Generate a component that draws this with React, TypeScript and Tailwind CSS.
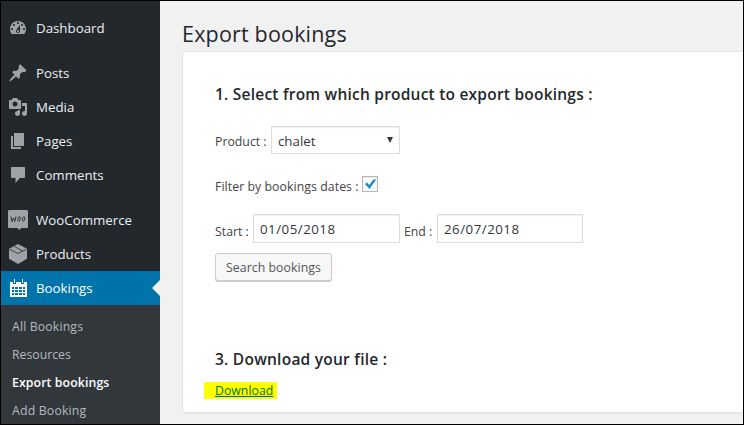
import type { ReactNode } from 'react';

const icons: Record<string, ReactNode> = {
  dashboard: (
    <path
      fillRule="evenodd"
      d="M3.76 16h12.48c1.1-1.37 1.76-3.11 1.76-5 0-4.42-3.58-8-8-8s-8 3.58-8 8c0 1.89.66 3.63 1.76 5zM10 4c.55 0 1 .45 1 1s-.45 1-1 1-1-.45-1-1 .45-1 1-1zM6 6c.55 0 1 .45 1 1s-.45 1-1 1-1-.45-1-1 .45-1 1-1zm8 0c.55 0 1 .45 1 1s-.45 1-1 1-1-.45-1-1 .45-1 1-1zm-5.37 5.55L12 7v6c0 1.1-.9 2-2 2s-2-.9-2-2c0-.57.24-1.08.63-1.45zM4 10c.55 0 1 .45 1 1s-.45 1-1 1-1-.45-1-1 .45-1 1-1zm12 0c.55 0 1 .45 1 1s-.45 1-1 1-1-.45-1-1 .45-1 1-1zm-5 3c0-.55-.45-1-1-1s-1 .45-1 1 .45 1 1 1 1-.45 1-1z"
    />
  ),
  posts: (
    <path d="M10.44 3.02l1.82-1.82 6.36 6.35-1.83 1.82c-1.05-.68-2.48-.57-3.41.36l-.75.75c-.92.93-1.04 2.35-.35 3.41l-1.83 1.82-2.41-2.41-2.8 2.79c-.42.42-3.38 2.71-3.8 2.29s1.86-3.39 2.28-3.81l2.79-2.79L4.1 9.36l1.83-1.82c1.05.69 2.48.57 3.4-.36l.75-.75c.93-.92 1.05-2.35.36-3.41z" />
  ),
  media: (
    <path
      fillRule="evenodd"
      d="M13 11V4c0-.55-.45-1-1-1h-1.67L9 1H5L3.67 3H2c-.55 0-1 .45-1 1v7c0 .55.45 1 1 1h10c.55 0 1-.45 1-1zM7 4.5c1.38 0 2.5 1.12 2.5 2.5S8.38 9.5 7 9.5 4.5 8.38 4.5 7 5.62 4.5 7 4.5zM14 6h5v10.5c0 1.38-1.12 2.5-2.5 2.5S14 17.88 14 16.5s1.12-2.5 2.5-2.5c.17 0 .34.02.5.05V9h-3V6zm-4 8.05V13h2v3.5c0 1.38-1.12 2.5-2.5 2.5S7 17.88 7 16.5 8.12 14 9.5 14c.17 0 .34.02.5.05z"
    />
  ),
  pages: <path d="M6 15V2h10v13H6zm-1 1h8v2H3V5h2v11z" />,
  comments: (
    <path d="M4 2h12c.6 0 1 .4 1 1v9c0 .6-.4 1-1 1h-4l-4.500 5v-5H4c-.6 0-1-.4-1-1V3c0-.6.4-1 1-1z" />
  ),
  woo: (
    <>
      <path d="M1.600 0h16.800c1 0 1.600.7 1.600 1.600v14.800c0 1-.7 1.600-1.600 1.600H13l-1.500 2-2.300-2H1.600C.6 18 0 17.400 0 16.400V1.600C0 .7.6 0 1.600 0z" />
      <path
        d="M3 6.500l1 5 1.600-3.500 1.100 3.500L8 6.500M16.300 6.800c-1.700-1-2.600 4.400-1 4.400 1.500 0 1.900-3.600 1-4.400zM11.800 6.800c-1.700-1-2.600 4.400-1 4.400 1.500 0 1.900-3.600 1-4.400z"
        fill="none"
        stroke="#23282d"
        strokeWidth="0.9"
      />
    </>
  ),
  products: (
    <>
      <path d="M10 0l9 4.800v10L10 20l-9-5.200v-10z" />
      <path d="M1.500 5.300L10 9.500l8.500-4.200M6.500 2.500l8.300 4.700" fill="none" stroke="#23282d" strokeWidth="0.8" />
    </>
  ),
  bookings: (
    <path
      fillRule="evenodd"
      d="M6 1h1v4H6zM14 1h1v4h-1zM2 4h3v2h3V4h5v2h3V4h3v15H2zM4 9v2h2V9zM7 9v2h3V9zM11 9v2h3V9zM15 9v2h2V9zM4 12v2h2v-2zM7 12v2h3v-2zM11 12v2h3v-2zM15 12v2h2v-2zM4 15v2h2v-2zM7 15v2h3v-2zM11 15v2h3v-2zM15 15v2h2v-2z"
    />
  ),
};

function MenuItem({ icon, label, active }: { icon: string; label: string; active?: boolean }) {
  return (
    <a className={`flex h-[34px] shrink-0 items-center pl-[7px] ${active ? 'bg-[#0073aa] text-white' : 'text-[#eeeeee]'}`}>
      <svg viewBox="0 0 20 20" className={`size-5 shrink-0 ${active ? 'fill-white' : 'fill-[#9ea3a8]'}`}>
        {icons[icon]}
      </svg>
      <span className="pt-0.5 pl-2 text-[13.3px]">{label}</span>
      {active && (
        <svg viewBox="0 0 8 16" className="ml-auto h-4 w-2 fill-[#f1f1f1]">
          <path d="M8 0v16L0 8z" />
        </svg>
      )}
    </a>
  );
}

export default function App() {
  return (
    <div className="flex h-[425px] w-[744px] overflow-hidden border border-black bg-[#f1f1f1] font-['Open_Sans','Noto_Sans',sans-serif] text-[12.3px] text-[#444444]">
      <nav className="flex w-[159px] shrink-0 flex-col bg-[#23282d] pt-[10px]">
        <MenuItem icon="dashboard" label="Dashboard" />
        <div className="h-[11px] shrink-0" />
        <MenuItem icon="posts" label="Posts" />
        <MenuItem icon="media" label="Media" />
        <MenuItem icon="pages" label="Pages" />
        <MenuItem icon="comments" label="Comments" />
        <div className="h-[11px] shrink-0" />
        <MenuItem icon="woo" label="WooCommerce" />
        <MenuItem icon="products" label="Products" />
        <MenuItem icon="bookings" label="Bookings" active />
        <div className="flex-1 bg-[#32373c] pt-2 pl-[11px] leading-[28px] text-[#b4b9be]">
          <div className="tracking-[0.13px]">All Bookings</div>
          <div className="tracking-[-0.02px]">Resources</div>
          <div className="font-semibold tracking-[0.1px] text-white">Export bookings</div>
          <div className="tracking-[0.17px]">Add Booking</div>
        </div>
      </nav>

      <main className="flex flex-1 flex-col pl-[22px]">
        <h1 className="h-[50px] pt-[18px] text-[21.5px] leading-[30px] tracking-[0.18px] text-[#23282d]">Export bookings</h1>
        <section className="h-[362px] border border-r-0 border-[#e5e5e5] bg-white pl-8 shadow-[0_1px_1px_rgba(0,0,0,0.04)]">
          <h2 className="mt-[30px] h-6 text-[15.5px] leading-6 font-semibold tracking-[0.22px] text-[#23282d]">
            1. Select from which product to export bookings :
          </h2>
          <div className="mt-5 flex h-7 items-center">
            <label className="w-14 pt-1">Product :</label>
            <div className="flex h-7 w-[129px] items-center justify-between border border-[#dddddd] px-1.5 text-[13.3px] text-[#32373c] shadow-[inset_0_1px_2px_rgba(0,0,0,0.07)]">
              <span className="pt-[3px]">chalet</span>
              <svg viewBox="0 0 6 6" className="h-1.5 w-1.5 fill-[#32373c]">
                <path d="M0 0h6L3 6z" />
              </svg>
            </div>
          </div>
          <div className="mt-[22px] flex h-4 items-center">
            <label className="w-[147px] pt-1.5 tracking-[0.06px]">Filter by bookings dates :</label>
            <div className="size-4 border border-[#b4b9be] shadow-[inset_0_1px_2px_rgba(0,0,0,0.1)]">
              <svg viewBox="0 0 14 14" className="size-3.5 fill-[#1e8cbe]">
                <path d="M2 7l2.200-1.500L6.200 8l4.300-5.500H13.300L6.500 12z" />
              </svg>
            </div>
          </div>
          <div className="mt-[22px] flex h-[29px] items-center">
            <label className="w-[38px] pt-[7px]">Start :</label>
            <div className="flex h-[29px] w-[147px] items-center border border-[#dddddd] px-1.5 pt-0.5 text-[13.3px] tracking-[0.5px] text-[#32373c] shadow-[inset_0_1px_2px_rgba(0,0,0,0.07)]">
              01/05/2018
            </div>
            <label className="w-[37px] pt-[7px] pl-1">End :</label>
            <div className="flex h-[29px] w-[146px] items-center border border-[#dddddd] px-1.5 pt-0.5 text-[13.3px] tracking-[0.5px] text-[#32373c] shadow-[inset_0_1px_2px_rgba(0,0,0,0.07)]">
              26/07/2018
            </div>
          </div>
          <button className="mt-[10px] flex h-7 w-[117px] items-center justify-center rounded-[3px] border border-[#cccccc] bg-[#f7f7f7] pt-0.5 tracking-[0.05px] text-[#555555] shadow-[0_1px_0_#cccccc]">
            Search bookings
          </button>
          <h2 className="mt-[66px] h-6 text-[15.5px] leading-6 font-semibold tracking-[0.24px] text-[#23282d]">3. Download your file :</h2>
          <div className="-ml-[11px] mt-[11px] h-[17px] w-[73px] bg-[#ffff00] pl-[11px] leading-[18px]">
            <a className="text-[#007700] underline">Download</a>
          </div>
        </section>
      </main>
    </div>
  );
}
